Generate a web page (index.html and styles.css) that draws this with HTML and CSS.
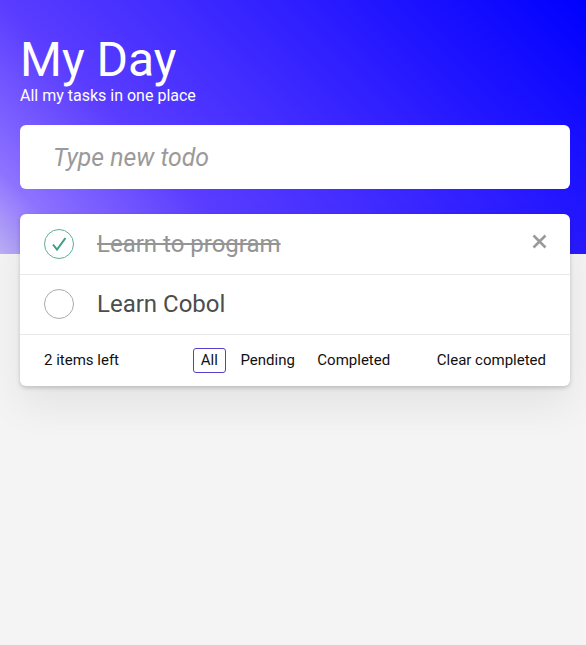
FILE: index.html
```html
<!DOCTYPE html>
<html lang="en">
<head>
<meta charset="utf-8">
<title>My Day</title>
<link rel="stylesheet" href="styles.css">
</head>
<body>
<div class="app">
  <header class="hero">
    <h1 class="title">My Day</h1>
    <p class="subtitle">All my tasks in one place</p>
  </header>
  <input class="new-todo" type="text" placeholder="Type new todo">
  <section class="card">
    <ul class="list">
      <li class="item done">
        <span class="check">
          <svg width="32" height="32" viewBox="0 0 32 32"><circle cx="16" cy="16" r="14.5" fill="none" stroke="#5cae9a" stroke-width="1"/><path d="M10 16.5 L14 21.5 L22.5 10" fill="none" stroke="#3c9e86" stroke-width="2"/></svg>
        </span>
        <span class="label">Learn to program</span>
        <span class="remove">
          <svg width="15" height="15" viewBox="0 0 15 15"><path d="M1.5 1.5 L13.5 13.5 M13.5 1.5 L1.5 13.5" stroke="#9a9a9a" stroke-width="2.6"/></svg>
        </span>
      </li>
      <li class="item">
        <span class="check">
          <svg width="32" height="32" viewBox="0 0 32 32"><circle cx="16" cy="16" r="14.5" fill="none" stroke="#ababab" stroke-width="1"/></svg>
        </span>
        <span class="label">Learn Cobol</span>
      </li>
    </ul>
    <footer class="footer">
      <span class="count">2 items left</span>
      <nav class="filters">
        <a class="filter selected">All</a>
        <a class="filter">Pending</a>
        <a class="filter">Completed</a>
      </nav>
      <span class="clear">Clear completed</span>
    </footer>
  </section>
</div>
</body>
</html>
```
FILE: styles.css
```css
* { box-sizing: border-box; }
html, body { margin: 0; padding: 0; }
body {
  font-family: Roboto, "Liberation Sans", sans-serif;
  background: #f4f4f4;
}
.app {
  min-height: 645px;
  padding: 32px 16px 40px 20px;
  background:
    linear-gradient(45deg, #bcb0f4 0%, #8e72ff 10%, #5a3dff 30%, #2a1bff 68%, #0000ff 100%) top left / 100% 254px no-repeat,
    #f4f4f4;
}
.hero { color: #fff; }
.title {
  margin: 0;
  font-size: 48px;
  font-weight: 400;
  line-height: 55px;
}
.subtitle {
  margin: 0;
  font-size: 16px;
  line-height: 18px;
}
.new-todo {
  display: block;
  width: 100%;
  height: 64px;
  margin-top: 20px;
  padding: 0 33px;
  border: none;
  border-radius: 6px;
  background: #fff;
  font-family: inherit;
  font-size: 24.8px;
  color: #4d4d4d;
  outline: none;
}
.new-todo::placeholder {
  font-style: italic;
  color: #9a9a9a;
}
.card {
  margin-top: 25px;
  background: #fff;
  border-radius: 6px;
  box-shadow: 0 2px 4px rgba(0,0,0,0.18), 0 20px 40px rgba(0,0,0,0.07);
}
.list { list-style: none; margin: 0; padding: 1px 0 0; }
.item {
  display: flex;
  align-items: center;
  height: 60px;
  padding: 0 24px 2px 23px;
  border-bottom: 1px solid #e8e8e8;
}
.check { display: flex; width: 32px; height: 32px; }
.label {
  flex: 1;
  margin-left: 22px;
  font-size: 24px;
  color: #4d4d4d;
}
.done .label {
  color: #949494;
  text-decoration: line-through;
}
.remove { display: flex; margin-top: -4px; margin-right: -1px; }
.footer {
  display: grid;
  grid-template-columns: 1fr auto 1fr;
  align-items: center;
  height: 51px;
  padding: 0 24px 1px;
  font-size: 15px;
  color: #111;
}
.filters { display: flex; gap: 6.5px; margin-left: 1px; }
.filter {
  padding: 3px 7px;
  border: 1px solid transparent;
  border-radius: 3px;
  line-height: 17px;
}
.filter.selected { border-color: #5a3fcf; }
.clear { justify-self: end; }
```
